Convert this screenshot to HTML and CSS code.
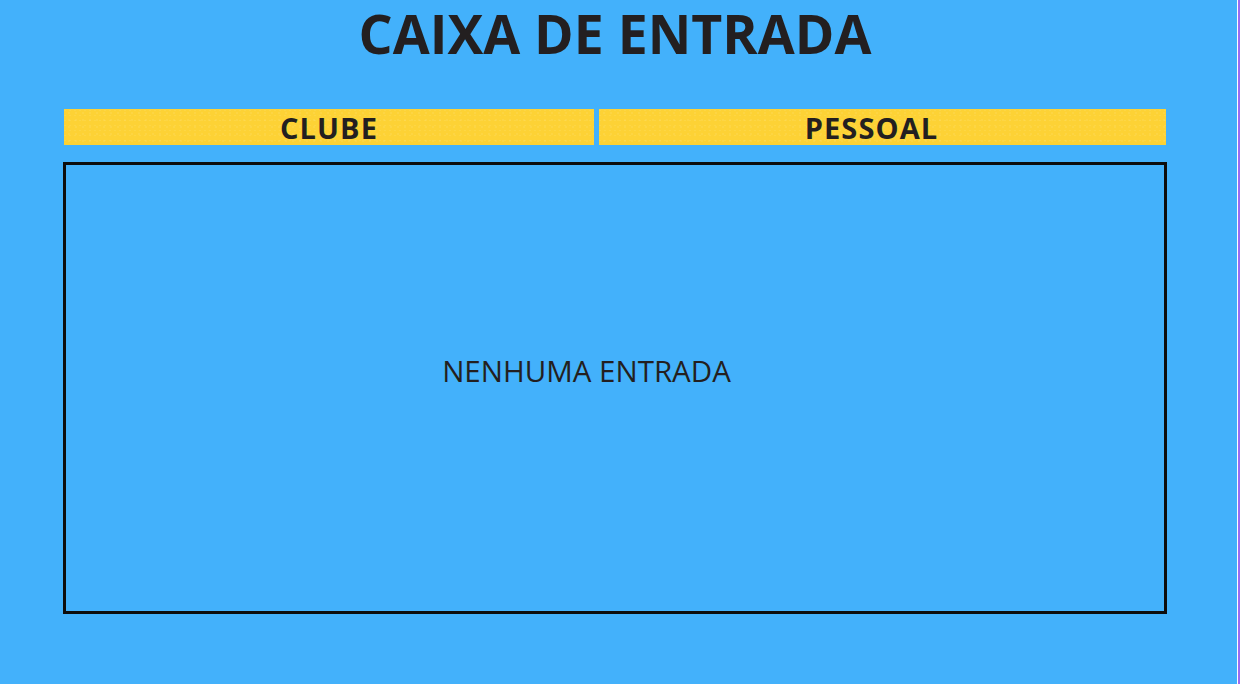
FILE: index.html
```html
<!DOCTYPE html>
<html lang="pt">
<head>
<meta charset="utf-8">
<title>Caixa de Entrada</title>
<link rel="stylesheet" href="styles.css">
</head>
<body>
<div class="page">
  <h1 class="title">CAIXA DE ENTRADA</h1>
  <div class="tabs">
    <div class="tab tab-club">CLUBE</div>
    <div class="tab tab-personal">PESSOAL</div>
  </div>
  <div class="inbox">
    <p class="empty">NENHUMA ENTRADA</p>
  </div>
</div>
</body>
</html>
```
FILE: styles.css
```css
html, body {
  margin: 0;
  padding: 0;
  height: 100%;
}
body {
  background: #43b1fb;
  font-family: "Open Sans", "Noto Sans", sans-serif;
  color: #231f20;
  overflow: hidden;
  border-right: 2px solid #9b6cf0;
  box-sizing: border-box;
  box-shadow: inset -1px 0 0 #ffffff;
}
.page {
  display: flex;
  flex-direction: column;
  padding: 0 71px 0 63px;
}
.title {
  margin: 0;
  font-size: 53.6px;
  font-weight: 700;
  line-height: 68px;
  text-align: center;
  padding-left: 0;
}
.tabs {
  display: flex;
  gap: 5px;
  margin: 41px 1px 0 1px;
}
.tab {
  height: 36px;
  background-color: #fdd235;
  background-image:
    radial-gradient(circle at 20% 30%, rgba(255,255,255,0.08) 0 1px, transparent 1px),
    radial-gradient(circle at 70% 60%, rgba(255,255,255,0.07) 0 1px, transparent 1px);
  background-size: 5px 5px, 7px 7px;
  font-size: 29px;
  font-weight: 700;
  letter-spacing: 1.1px;
  line-height: 38px;
  text-align: center;
  overflow: visible;
}
.tab-club {
  width: 530px;
}
.tab-personal {
  flex: 1;
  padding-right: 22px;
}
.inbox {
  margin-top: 17px;
  height: 452px;
  box-sizing: border-box;
  border: 3px solid #0d0d0d;
  display: flex;
  align-items: center;
  justify-content: center;
  padding-right: 57px;
  padding-bottom: 35px;
}
.empty {
  margin: 0;
  font-size: 29.5px;
  font-weight: 400;
}
```
